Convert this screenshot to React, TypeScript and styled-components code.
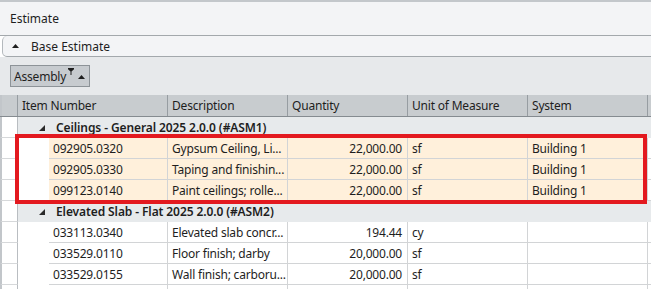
import React from 'react';
import styled, { createGlobalStyle, css } from 'styled-components';

const GlobalStyle = createGlobalStyle`
    body {
        margin: 0;
        font-family: 'Segoe UI', 'Noto Sans', 'Open Sans', sans-serif;
        font-size: 12px;
        color: #1e1e1e;
    }
`;

const Frame = styled.div`
    width: 651px;
    height: 289px;
    overflow: hidden;
    background: #ffffff;
`;

const TitleBar = styled.div`
    height: 33px;
    display: flex;
    align-items: center;
    padding-left: 10px;
    background: #f3f4f6;
    border-top: 2px solid #c3c7cb;
    border-bottom: 1px solid #a3a8ac;
    font-size: 12px;
`;

const Expander = styled.div`
    height: 20px;
    margin-left: 2px;
    display: flex;
    align-items: center;
    gap: 12px;
    padding-left: 9px;
    background: #f3f4f6;
    border-left: 1px solid #b4b9bd;
    border-bottom: 1px solid #a3a8ac;
    border-radius: 5px 0 0 5px;
`;

const GroupPanel = styled.div`
    height: 38px;
    display: flex;
    align-items: center;
    padding-left: 10px;
    box-sizing: border-box;
    background: #e7e9eb;
`;

const Chip = styled.div`
    height: 20px;
    display: flex;
    align-items: center;
    padding: 0 4px 0 3px;
    background: #c7cbcf;
    border: 1px solid #8d9398;
    letter-spacing: -0.2px;
`;

const ChipIcons = styled.span`
    display: flex;
    align-items: flex-start;
    gap: 4px;
    margin-left: 2px;
    align-self: stretch;
    padding-top: 2px;
`;

const SortSlot = styled.span`
    display: flex;
    padding-top: 7px;
`;

const Row = styled.div<{ $kind?: 'header' | 'group' | 'data' }>`
    display: flex;
    height: 21px;
    ${(p) => p.$kind === 'header' && css`
        height: 21px;
        background: #c8cccf;
        border-bottom: 1px solid #858b90;
    `}
`;

const Indicator = styled.div<{ $header?: boolean }>`
    width: 15px;
    flex: none;
    border-left: 2px solid #c2c6ca;
    box-sizing: content-box;
    ${(p) => p.$header
        ? css`
            background: #c8cccf;
            border-right: 1px solid #979da2;
        `
        : css`
            background: #ffffff;
            border-right: 1px solid #b9bdc1;
            border-bottom: 1px solid #d6d8da;
            height: 20px;
        `}
`;

const HeadCell = styled.div<{ $w: number }>`
    width: ${(p) => p.$w}px;
    flex: none;
    box-sizing: border-box;
    padding-left: 4px;
    display: flex;
    align-items: center;
    letter-spacing: -0.2px;
    border-right: 1px solid #979da2;
`;

const HeadFill = styled.div`
    flex: 1;
`;

const GroupCell = styled.div`
    flex: 1;
    display: flex;
    align-items: center;
    gap: 11px;
    padding-left: 21px;
    background: #e7eaec;
    font-weight: 600;
    letter-spacing: -0.1px;
    height: 21px;
    box-sizing: border-box;
`;

const Indent = styled.div`
    width: 31px;
    flex: none;
    background: #ffffff;
`;

const Cell = styled.div<{ $w: number; $right?: boolean; $hl?: boolean }>`
    width: ${(p) => p.$w}px;
    flex: none;
    box-sizing: border-box;
    height: 21px;
    display: flex;
    align-items: center;
    justify-content: ${(p) => (p.$right ? 'flex-end' : 'flex-start')};
    padding: ${(p) => (p.$right ? '0 5px 0 4px' : '0 0 0 4px')};
    white-space: nowrap;
    overflow: hidden;
    letter-spacing: -0.2px;
    background: ${(p) => (p.$hl ? '#fff0db' : '#ffffff')};
    border-right: 1px solid #d2d4d6;
    border-bottom: 1px solid #d2d4d6;
`;

const CellFill = styled.div`
    flex: 1;
    background: #ffffff;
    border-bottom: 1px solid #d2d4d6;
`;

const Selection = styled.div`
    position: relative;

    &::after {
        content: '';
        position: absolute;
        left: 15px;
        right: 4px;
        top: -4px;
        bottom: -3px;
        border: 4px solid #e3191f;
        pointer-events: none;
    }
`;

const UpArrow = () => (
    <svg width="7" height="4" viewBox="0 0 7 4">
        <path d="M0 4L3.5 0L7 4Z" fill="#1e1e1e" />
    </svg>
);

const Funnel = () => (
    <svg width="6" height="7" viewBox="0 0 6 7">
        <path d="M0 0H6V1.2L3.5 3.4V7H2.5V3.4L0 1.2Z" fill="#1e1e1e" />
    </svg>
);

const Expanded = () => (
    <svg width="6" height="6" viewBox="0 0 6 6">
        <path d="M6 0V6H0Z" fill="#2a2a2a" />
    </svg>
);

const columns = [
    { title: 'Item Number', w: 150 },
    { title: 'Description', w: 120 },
    { title: 'Quantity', w: 120 },
    { title: 'Unit of Measure', w: 120 },
    { title: 'System', w: 120 },
];

interface Item {
    code: string;
    desc: string;
    qty: string;
    unit: string;
    system: string;
}

interface Group {
    name: string;
    items: Item[];
    selected?: boolean;
}

const groups: Group[] = [
    {
        name: 'Ceilings - General 2025 2.0.0 (#ASM1)',
        selected: true,
        items: [
            { code: '092905.0320', desc: 'Gypsum Ceiling, Li...', qty: '22,000.00', unit: 'sf', system: 'Building 1' },
            { code: '092905.0330', desc: 'Taping and finishin...', qty: '22,000.00', unit: 'sf', system: 'Building 1' },
            { code: '099123.0140', desc: 'Paint ceilings; rolle...', qty: '22,000.00', unit: 'sf', system: 'Building 1' },
        ],
    },
    {
        name: 'Elevated Slab - Flat 2025 2.0.0 (#ASM2)',
        items: [
            { code: '033113.0340', desc: 'Elevated slab concr...', qty: '194.44', unit: 'cy', system: '' },
            { code: '033529.0110', desc: 'Floor finish; darby', qty: '20,000.00', unit: 'sf', system: '' },
            { code: '033529.0155', desc: 'Wall finish; carboru...', qty: '20,000.00', unit: 'sf', system: '' },
            { code: '', desc: '', qty: '', unit: '', system: '' },
        ],
    },
];

const ItemRow: React.FC<{ item: Item; hl?: boolean }> = ({ item, hl }) => (
    <Row>
        <Indicator />
        <Indent />
        <Cell $w={119} $hl={hl}>{item.code}</Cell>
        <Cell $w={120} $hl={hl}>{item.desc}</Cell>
        <Cell $w={120} $hl={hl} $right>{item.qty}</Cell>
        <Cell $w={120} $hl={hl}>{item.unit}</Cell>
        <Cell $w={120} $hl={hl}>{item.system}</Cell>
        <CellFill />
    </Row>
);

export default function App() {
    return (
        <Frame>
            <GlobalStyle />
            <TitleBar>Estimate</TitleBar>
            <Expander>
                <UpArrow />
                <span>Base Estimate</span>
            </Expander>
            <GroupPanel>
                <Chip>
                    Assembly
                    <ChipIcons>
                        <Funnel />
                        <SortSlot>
                            <UpArrow />
                        </SortSlot>
                    </ChipIcons>
                </Chip>
            </GroupPanel>
            <Row $kind="header">
                <Indicator $header />
                {columns.map((c) => (
                    <HeadCell key={c.title} $w={c.w}>{c.title}</HeadCell>
                ))}
                <HeadFill />
            </Row>
            {groups.map((g) => {
                const rows = g.items.map((it, i) => (
                    <ItemRow key={i} item={it} hl={g.selected} />
                ));
                return (
                    <React.Fragment key={g.name}>
                        <Row $kind="group">
                            <Indicator />
                            <GroupCell>
                                <Expanded />
                                {g.name}
                            </GroupCell>
                        </Row>
                        {g.selected ? <Selection>{rows}</Selection> : rows}
                    </React.Fragment>
                );
            })}
        </Frame>
    );
}
